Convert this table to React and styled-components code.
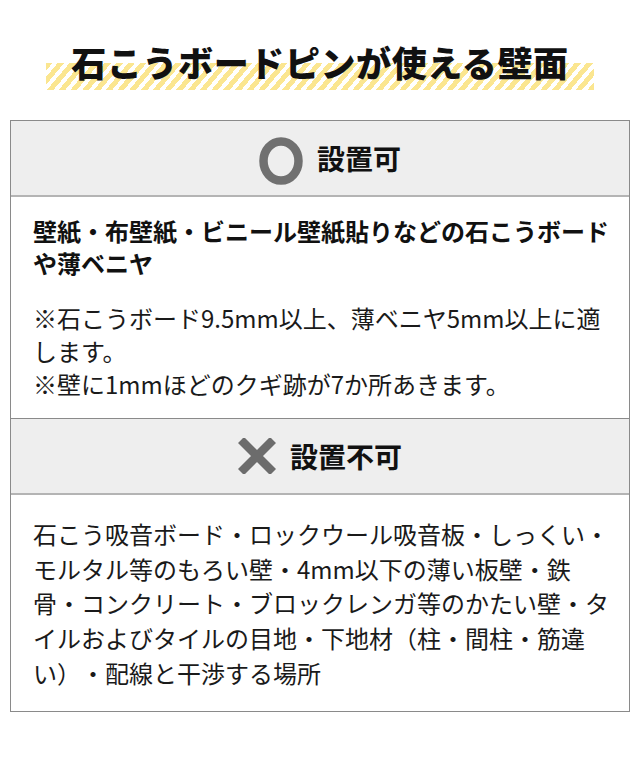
import { createGlobalStyle, styled } from "styled-components";

const GlobalStyle = createGlobalStyle`
	body {
		margin: 0;
		background: #fff;
		font-family: "Noto Sans CJK JP", "Noto Sans", sans-serif;
		color: #1a1a1a;
		text-spacing-trim: space-all;
	}
`;

const Page = styled.div`
	width: 640px;
	padding: 41px 0 52px;
	box-sizing: border-box;
`;

const TitleRow = styled.div`
	text-align: center;
	margin-bottom: 30px;
`;

const Title = styled.h1`
	display: inline-block;
	margin: 0;
	padding: 0 25px 7px;
	font-size: 35px;
	line-height: 42px;
	font-weight: 900;
	letter-spacing: 0.6px;
	color: #111;
	background-image: repeating-linear-gradient(
		130deg,
		#fbe690 0 5px,
		transparent 5px 9px
	);
	background-size: 100% 27px;
	background-position: left bottom;
	background-repeat: no-repeat;
`;

const Panel = styled.div`
	margin: 0 10px;
	border: 1px solid #8a8a8a;
`;

const SectionHead = styled.div`
	display: flex;
	align-items: center;
	justify-content: center;
	gap: 14px;
	height: 74px;
	padding-left: ${(p) => p.$shift || 0}px;
	background: #eeeeee;
	border-top: ${(p) => (p.$first ? "none" : "1px solid #8a8a8a")};
	border-bottom: 2px solid #b4b4b4;
`;

const HeadLabel = styled.span`
	font-size: 28px;
	font-weight: 700;
	line-height: 1;
	color: #111;
`;

const Body = styled.div`
	padding: ${(p) => p.$pad};
	padding-left: 22px;
	padding-right: 19px;
	font-size: 24px;
`;

const Lead = styled.p`
	margin: 0;
	font-weight: 700;
	line-height: 32px;
	color: #111;
`;

const Note = styled.p`
	margin: 22px 0 0;
	line-height: 33px;
`;

const Plain = styled.p`
	margin: 0;
	line-height: 34.7px;
`;

const CircleMark = () => (
	<svg width="44" height="48" viewBox="0 0 44 48" style={{ marginTop: 5 }}>
		<ellipse
			cx="22"
			cy="24"
			rx="17.5"
			ry="19.5"
			fill="none"
			stroke="#707070"
			strokeWidth="8.5"
		/>
	</svg>
);

const CrossMark = () => (
	<svg width="38" height="36" viewBox="0 0 38 36">
		<path
			d="M3 2 L35 34 M35 2 L3 34"
			stroke="#6c6c6c"
			strokeWidth="8.5"
			fill="none"
		/>
	</svg>
);

export default function App() {
	return (
		<>
			<GlobalStyle />
			<Page>
				<TitleRow>
					<Title>石こうボードピンが使える壁面</Title>
				</TitleRow>
				<Panel>
					<SectionHead $first $shift={20}>
						<CircleMark />
						<HeadLabel>設置可</HeadLabel>
					</SectionHead>
					<Body $pad="18px 0 18px">
						<Lead>
							壁紙・布壁紙・ビニール壁紙貼りなどの石こうボードや薄ベニヤ
						</Lead>
						<Note>
							※石こうボード9.5mm以上、薄ベニヤ5mm以上に適します。
							<br />
							※壁に1mmほどのクギ跡が7か所あきます。
						</Note>
					</Body>
					<SectionHead>
						<CrossMark />
						<HeadLabel>設置不可</HeadLabel>
					</SectionHead>
					<Body $pad="22px 0 20px">
						<Plain>
							石こう吸音ボード・ロックウール吸音板・しっくい・モルタル等のもろい壁・4mm以下の薄い板壁・鉄骨・コンクリート・ブロックレンガ等のかたい壁・タイルおよびタイルの目地・下地材（柱・間柱・筋違い）・配線と干渉する場所
						</Plain>
					</Body>
				</Panel>
			</Page>
		</>
	);
}
